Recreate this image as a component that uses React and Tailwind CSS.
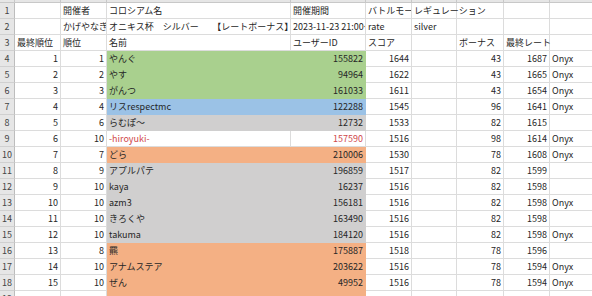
import React from "react";

const colW = [
  "w-[46px]",
  "w-[46px]",
  "w-[184px]",
  "w-[75px]",
  "w-[46px]",
  "w-[45px]",
  "w-[47px]",
  "w-[46px]",
  "w-[46px]",
];

const G = "green";
const B = "blue";
const Y = "gray";
const O = "orange";

const fillCls = {
  green: "bg-[#a9d08e] border-[#a9d08e]",
  blue: "bg-[#9bc2e6] border-[#9bc2e6]",
  gray: "bg-[#d0cfcf] border-[#d0cfcf]",
  orange: "bg-[#f4b084] border-[#f4b084]",
};

const rows = [
  { c: ["", "開催者", "コロシアム名", "開催期間", "バトルモード", "レギュレーション", "", "", ""] },
  {
    c: [
      "",
      "かげやなぎ",
      "オニキス杯　シルバー　　【レートボーナス】",
      "2023-11-23 21:00～2023-11-30 21:00",
      "rate",
      "silver",
      "",
      "",
      "",
    ],
  },
  { c: ["最終順位", "順位", "名前", "ユーザーID", "スコア", "", "ボーナス", "最終レート", ""] },
  { c: [1, 1, "やんぐ", 155822, 1644, "", 43, 1687, "Onyx"], f: G },
  { c: [2, 2, "やす", 94964, 1622, "", 43, 1665, "Onyx"], f: G },
  { c: [3, 3, "がんつ", 161033, 1611, "", 43, 1654, "Onyx"], f: G },
  { c: [4, 4, "リスrespectmc", 122288, 1545, "", 96, 1641, "Onyx"], f: B },
  { c: [5, 6, "らむぽ～", 12732, 1533, "", 82, 1615, ""], f: Y },
  { c: [6, 10, "-hiroyuki-", 157590, 1516, "", 98, 1614, "Onyx"], red: true },
  { c: [7, 7, "どら", 210006, 1530, "", 78, 1608, "Onyx"], f: O },
  { c: [8, 9, "アプルパテ", 196859, 1517, "", 82, 1599, ""], f: Y },
  { c: [9, 10, "kaya", 16237, 1516, "", 82, 1598, ""], f: Y },
  { c: [10, 10, "azm3", 156181, 1516, "", 82, 1598, "Onyx"], f: Y },
  { c: [11, 10, "きろくや", 163490, 1516, "", 82, 1598, ""], f: Y },
  { c: [12, 10, "takuma", 184120, 1516, "", 82, 1598, "Onyx"], f: Y },
  { c: [13, 8, "羆", 175887, 1518, "", 78, 1596, ""], f: O },
  { c: [14, 10, "アナムステア", 203622, 1516, "", 78, 1594, "Onyx"], f: O },
  { c: [15, 10, "ぜん", 49952, 1516, "", 78, 1594, "Onyx"], f: O },
  { c: ["", "", "", "", "", "", "", "", ""], f: O },
];

function Cell({ v, i, row, ri }) {
  const filled = row.f && (i === 2 || i === 3);
  const isNum = typeof v === "number";
  const red = row.red && (i === 2 || i === 3);
  const visible = (ri === 0 && i === 5) || (ri === 2 && i === 7);
  return (
    <div
      className={
        "h-4 shrink-0 border-r border-b flex items-center whitespace-nowrap leading-[15px] " +
        colW[i] +
        " " +
        (filled ? fillCls[row.f] : "border-[#dcdcdc]") +
        " " +
        (isNum ? "justify-end pr-[2px]" : "justify-start pl-[2px]") +
        " " +
        (visible ? "overflow-visible" : "overflow-hidden") +
        " " +
        (red ? "text-[#d0474a]" : "text-[#262626]")
      }
    >
      {v === "" ? null : String(v)}
    </div>
  );
}

export default function App() {
  return (
    <div
      className="w-[592px] h-[296px] overflow-hidden bg-white text-[9px]"
      style={{ fontFamily: '"Noto Sans CJK JP", "Noto Sans", sans-serif' }}
    >
      <div className="flex h-[3px] bg-[#e6e6e6] border-b border-[#c8c8c8]">
        <div className="w-[15px] shrink-0 border-r border-[#c8c8c8]" />
        {colW.map((w, i) => (
          <div key={i} className={"shrink-0 border-r border-[#c8c8c8] " + w} />
        ))}
      </div>
      {rows.map((row, ri) => (
        <div key={ri} className="flex">
          <div className="w-[15px] h-4 shrink-0 bg-[#e6e6e6] border-r border-b border-r-[#bdbdbd] border-b-[#d0d0d0] flex items-center justify-center text-[#444] leading-[15px]">
            {ri + 1}
          </div>
          {row.c.map((v, i) => (
            <Cell key={i} v={v} i={i} row={row} ri={ri} />
          ))}
        </div>
      ))}
    </div>
  );
}
